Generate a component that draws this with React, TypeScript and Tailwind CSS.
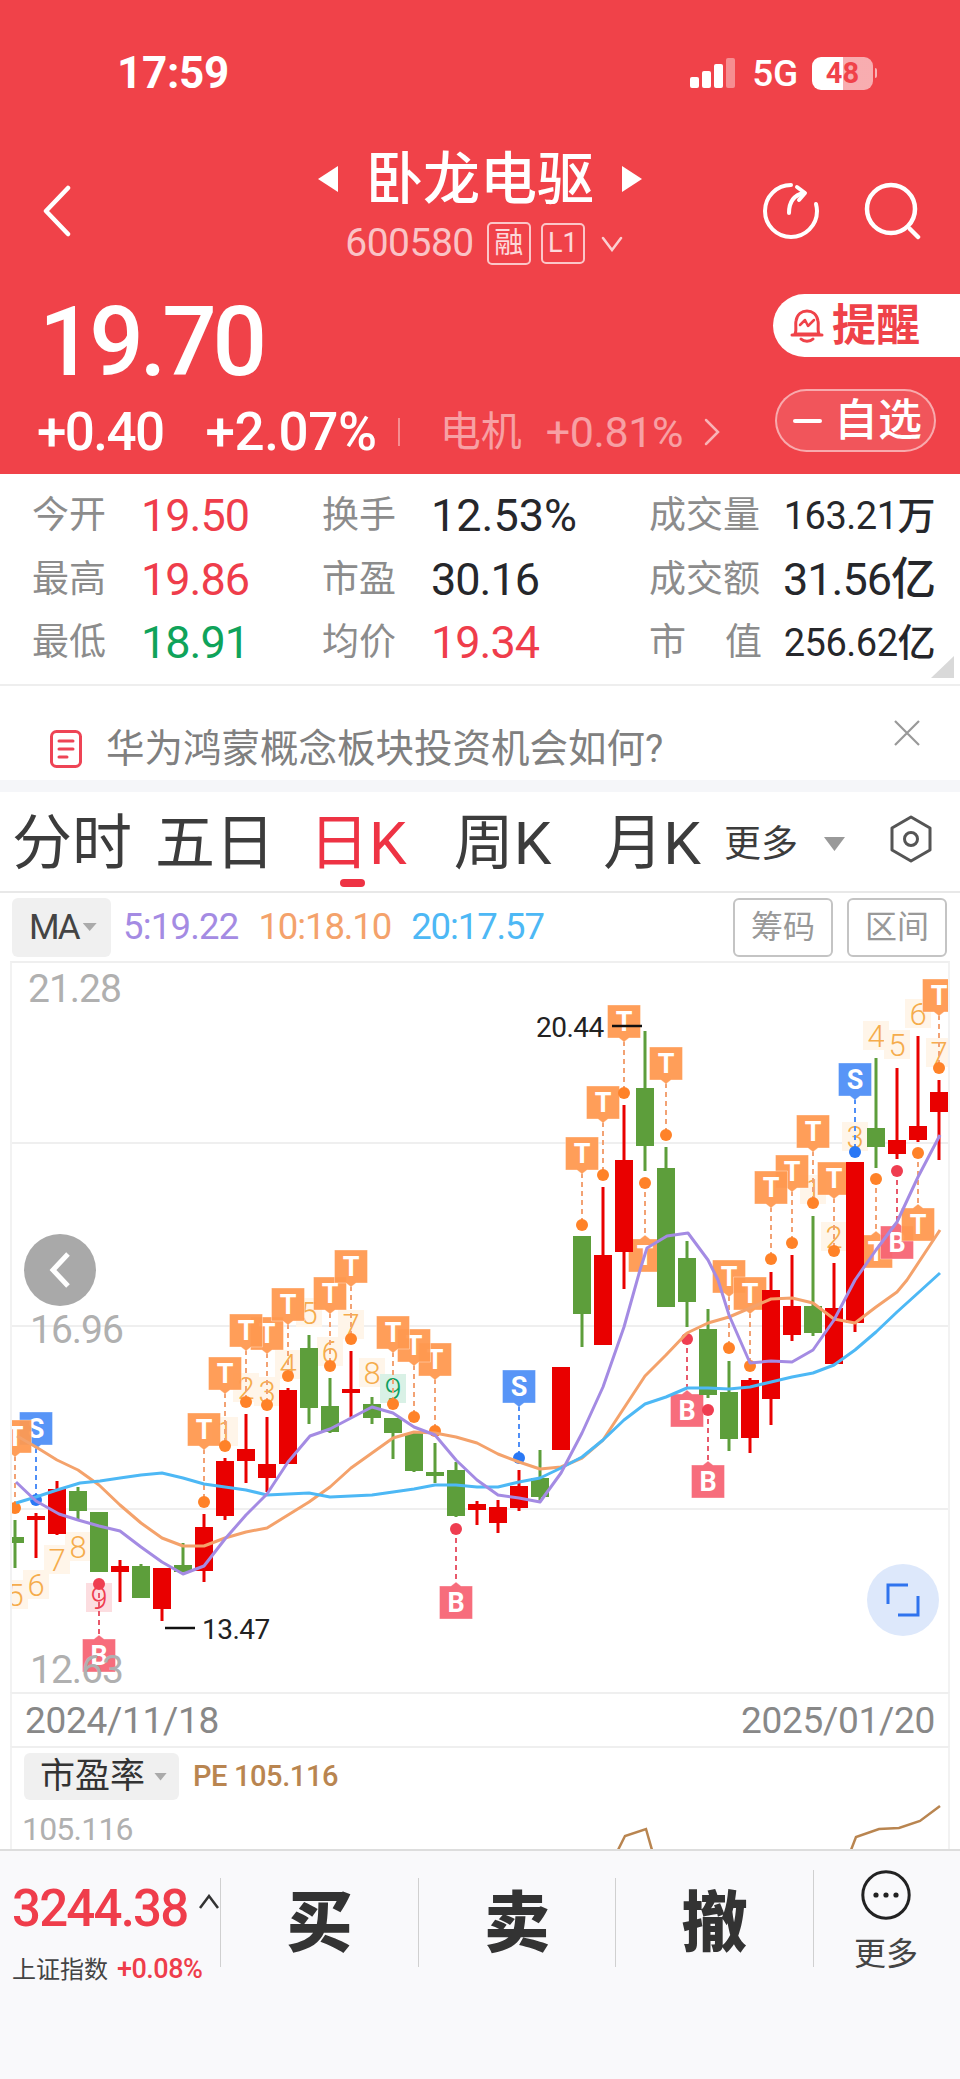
import React from "react";

// [x, up?, wickTop, bodyTop, bodyBottom, wickBottom]
type Candle = [number, boolean, number, number, number, number];

const candles: Candle[] = [
  [15, false, 1520, 1537, 1543, 1568],
  [36, true, 1513, 1516, 1520, 1558],
  [57, true, 1481, 1489, 1534, 1535],
  [78, false, 1487, 1491, 1511, 1521],
  [99, false, 1512, 1512, 1572, 1572],
  [120, true, 1560, 1566, 1572, 1602],
  [141, false, 1564, 1566, 1598, 1598],
  [162, true, 1568, 1568, 1609, 1621],
  [183, false, 1543, 1565, 1572, 1572],
  [204, true, 1514, 1527, 1571, 1582],
  [225, true, 1458, 1461, 1516, 1520],
  [246, true, 1414, 1449, 1461, 1483],
  [267, true, 1417, 1464, 1478, 1492],
  [288, true, 1388, 1390, 1464, 1464],
  [309, false, 1335, 1348, 1408, 1424],
  [330, false, 1378, 1406, 1432, 1433],
  [351, true, 1351, 1389, 1393, 1417],
  [372, false, 1397, 1404, 1418, 1424],
  [393, false, 1418, 1418, 1433, 1459],
  [414, false, 1433, 1433, 1471, 1472],
  [435, false, 1443, 1472, 1476, 1483],
  [456, false, 1462, 1470, 1516, 1517],
  [477, true, 1501, 1504, 1510, 1525],
  [498, true, 1500, 1507, 1523, 1533],
  [519, true, 1470, 1486, 1508, 1511],
  [540, false, 1450, 1478, 1497, 1502],
  [561, true, 1367, 1367, 1450, 1450],
  [582, false, 1236, 1236, 1314, 1347],
  [603, true, 1187, 1255, 1345, 1345],
  [624, true, 1105, 1160, 1252, 1289],
  [645, false, 1031, 1088, 1146, 1171],
  [666, false, 1147, 1168, 1307, 1307],
  [687, false, 1241, 1258, 1302, 1327],
  [708, false, 1309, 1329, 1395, 1398],
  [729, false, 1361, 1392, 1439, 1451],
  [750, true, 1378, 1380, 1438, 1453],
  [771, true, 1272, 1290, 1399, 1425],
  [792, true, 1255, 1306, 1335, 1341],
  [813, false, 1216, 1306, 1333, 1336],
  [834, true, 1263, 1308, 1364, 1364],
  [855, true, 1162, 1162, 1323, 1332],
  [876, false, 1058, 1128, 1147, 1168],
  [897, true, 1068, 1140, 1154, 1159],
  [918, true, 1036, 1126, 1140, 1142],
  [939, true, 1080, 1092, 1112, 1160],
];

const ma5 =
  "16,1482 36,1501 59,1514 78,1520 99,1526 120,1531 141,1547 162,1562 183,1574 204,1566 225,1539 246,1515 267,1494 288,1462 310,1436 330,1429 351,1418 372,1407 393,1413 414,1427 435,1435 456,1460 477,1480 498,1495 519,1498 540,1502 561,1473 582,1433 603,1387 624,1327 640,1270 647,1248 667,1236 688,1233 708,1260 718,1280 729,1315 750,1363 771,1361 792,1362 813,1350 834,1320 855,1280 876,1250 897,1222 918,1177 940,1135";
const ma10 =
  "17,1436 36,1447 57,1460 78,1470 99,1485 120,1505 141,1523 162,1538 183,1546 204,1546 225,1538 246,1532 267,1528 288,1515 309,1502 330,1487 351,1468 372,1453 393,1438 414,1432 435,1433 456,1437 477,1443 498,1454 519,1462 540,1469 561,1467 582,1458 603,1440 624,1408 645,1376 666,1355 687,1333 708,1323 729,1317 750,1308 771,1299 792,1298 813,1303 834,1319 855,1323 876,1307 897,1292 907,1280 940,1230";
const ma20 =
  "16,1503 36,1497 57,1490 80,1483 100,1481 120,1478 141,1475 162,1473 183,1478 204,1484 225,1487 246,1490 267,1495 288,1494 309,1493 330,1497 351,1496 372,1495 393,1492 414,1489 435,1485 456,1485 477,1487 498,1487 519,1482 540,1478 561,1468 582,1457 603,1440 624,1420 645,1404 666,1397 687,1388 708,1388 729,1389 750,1387 771,1382 792,1377 813,1373 834,1365 855,1350 876,1332 897,1312 918,1293 940,1273";

// trade signals: tag box + dot joined by a dashed line
type Signal = { x: number; top: number; dot: number; label: "T" | "S" | "B"; up?: boolean };

const signals: Signal[] = [
  { x: 267, top: 1317, dot: 1405, label: "T" },
  { x: 246, top: 1314, dot: 1402, label: "T" },
  { x: 330, top: 1277, dot: 1366, label: "T" },
  { x: 351, top: 1250, dot: 1339, label: "T" },
  { x: 288, top: 1288, dot: 1376, label: "T" },
  { x: 225, top: 1357, dot: 1446, label: "T" },
  { x: 204, top: 1413, dot: 1502, label: "T" },
  { x: 36, top: 1412, dot: 1500, label: "S" },
  { x: 15, top: 1420, dot: 1508, label: "T" },
  { x: 99, top: 1639, dot: 1584, label: "B", up: true },
  { x: 435, top: 1343, dot: 1431, label: "T" },
  { x: 414, top: 1329, dot: 1417, label: "T" },
  { x: 393, top: 1316, dot: 1404, label: "T" },
  { x: 456, top: 1586, dot: 1529, label: "B", up: true },
  { x: 519, top: 1370, dot: 1458, label: "S" },
  { x: 582, top: 1137, dot: 1225, label: "T" },
  { x: 603, top: 1086, dot: 1175, label: "T" },
  { x: 624, top: 1005, dot: 1093, label: "T" },
  { x: 645, top: 1239, dot: 1183, label: "T", up: true },
  { x: 666, top: 1047, dot: 1135, label: "T" },
  { x: 687, top: 1394, dot: 1339, label: "B", up: true },
  { x: 708, top: 1465, dot: 1410, label: "B", up: true },
  { x: 729, top: 1260, dot: 1348, label: "T" },
  { x: 750, top: 1277, dot: 1366, label: "T" },
  { x: 792, top: 1155, dot: 1243, label: "T" },
  { x: 771, top: 1171, dot: 1259, label: "T" },
  { x: 813, top: 1115, dot: 1203, label: "T" },
  { x: 834, top: 1162, dot: 1251, label: "T" },
  { x: 855, top: 1063, dot: 1152, label: "S" },
  { x: 876, top: 1235, dot: 1179, label: "T", up: true },
  { x: 897, top: 1226, dot: 1171, label: "B", up: true },
  { x: 918, top: 1208, dot: 1153, label: "T", up: true },
  { x: 939, top: 979, dot: 1068, label: "T" },
];

const tagColors = { T: "#FF9950", S: "#4F8FF7", B: "#F76575" };
const dashColors = { T: "#F2A274", S: "#4F8FF7", B: "#E8596B" };
const dotColors = { T: "#FF8228", S: "#2A78F5", B: "#EF3D50" };

// nine-turn count numbers behind the candles
const counts: [number, number, string, string?][] = [
  [15, 1595, "5"], [36, 1585, "6"], [57, 1560, "7"], [78, 1547, "8"], [99, 1598, "9", "red"],
  [225, 1432, "1"], [246, 1388, "2"], [267, 1392, "3"], [288, 1365, "4"], [309, 1313, "5"],
  [330, 1352, "6"], [351, 1325, "7"], [372, 1373, "8"], [393, 1389, "9", "green"],
  [813, 1190, "1"], [834, 1237, "2"], [855, 1137, "3"], [876, 1036, "4"], [897, 1045, "5"],
  [918, 1014, "6"], [939, 1053, "7"],
];

function KChart() {
  return (
    <svg viewBox="12 963 936 729" className="block w-full h-full">
      {[1143, 1326, 1509].map((y) => (
        <line key={y} x1="10" x2="950" y1={y} y2={y} stroke="#EFEFEF" strokeWidth="2" />
      ))}
      {counts.map(([x, y, n, tone]) => (
        <g key={`${x}-${n}`}>
          <rect
            x={x - 13}
            y={y - 15}
            width="26"
            height="29"
            fill={tone === "red" ? "#FCDDE0" : tone === "green" ? "#D9F1E6" : "#FFF5E9"}
          />
          <text
            x={x}
            y={y + 11}
            textAnchor="middle"
            fontSize="31"
            fontWeight="300"
            fill={tone === "red" ? "#EF3D50" : tone === "green" ? "#0FA060" : "#F5AC4C"}
          >
            {n}
          </text>
        </g>
      ))}
      {signals.map((s, i) => (
        <g key={i}>
          <line
            x1={s.x}
            x2={s.x}
            y1={s.up ? s.dot : s.top + 36}
            y2={s.up ? s.top - 3 : s.dot}
            stroke={dashColors[s.label]}
            strokeWidth="2"
            strokeDasharray="5 4"
          />
          <path
            d={
              s.up
                ? `M${s.x - 16.5} ${s.top}H${s.x - 5}L${s.x} ${s.top - 4}L${s.x + 5} ${s.top}H${s.x + 16.5}V${s.top + 33}H${s.x - 16.5}Z`
                : `M${s.x - 16.5} ${s.top}H${s.x + 16.5}V${s.top + 33}H${s.x + 5}L${s.x} ${s.top + 37}L${s.x - 5} ${s.top + 33}H${s.x - 16.5}Z`
            }
            fill={tagColors[s.label]}
            stroke="#fff"
            strokeOpacity="0.7"
            strokeWidth="0.5"
            fillOpacity="0.95"
          />
          <text
            x={s.x}
            y={s.top + 26}
            textAnchor="middle"
            fontSize="27"
            fontWeight="700"
            fill="#fff"
          >
            {s.label}
          </text>
        </g>
      ))}
      {candles.map(([x, up, wt, bt, bb, wb]) => (
        <g key={x} fill={up ? "#E90000" : "#5D9E3B"}>
          <rect x={x - 1.5} y={wt} width="3" height={wb - wt} />
          <rect x={x - 9} y={bt} width="18" height={bb - bt} />
        </g>
      ))}
      {signals.map((s, i) => (
        <circle key={i} cx={s.x} cy={s.dot} r="6" fill={dotColors[s.label]} />
      ))}
      <polyline points={ma10} fill="none" stroke="#F4A26B" strokeWidth="3" strokeLinejoin="round" />
      <polyline points={ma20} fill="none" stroke="#4DB8F5" strokeWidth="3" strokeLinejoin="round" />
      <polyline points={ma5} fill="none" stroke="#A48BE3" strokeWidth="3" strokeLinejoin="round" />
      <line x1="612" x2="642" y1="1026" y2="1026" stroke="#111" strokeWidth="2.5" />
      <text x="536" y="1037" fontSize="28" letterSpacing="-0.5" fill="#222">20.44</text>
      <line x1="165" x2="195" y1="1628" y2="1628" stroke="#111" strokeWidth="2.5" />
      <text x="202" y="1639" fontSize="28" letterSpacing="-0.5" fill="#222">13.47</text>
    </svg>
  );
}

function RefreshIcon() {
  return (
    <svg width="58" height="58" viewBox="0 0 58 58" fill="none" stroke="#fff" strokeWidth="4" strokeLinecap="round" strokeLinejoin="round">
      <path d="M29 3A26 26 0 1 0 55 29C55 26 54.5 24 54 22" />
      <path d="M27 31C27 20 32 13 42 11" />
      <path d="M35 5L43 11L37 18" />
    </svg>
  );
}

function SearchIcon() {
  return (
    <svg width="58" height="58" viewBox="0 0 58 58" fill="none" stroke="#fff" strokeWidth="4.5" strokeLinecap="round">
      <circle cx="27" cy="27" r="24" />
      <path d="M46 47L54 55" />
    </svg>
  );
}

function BellIcon() {
  return (
    <svg width="34" height="36" viewBox="0 0 34 36" fill="none" stroke="#EF4249" strokeWidth="3" strokeLinecap="round" strokeLinejoin="round">
      <path d="M5 26C7 22 5 17 6 13C7 6 12 3 17 3C22 3 27 6 28 13C29 17 27 22 29 26Z" />
      <path d="M2 27H32" />
      <path d="M11 31C14 34 20 34 23 31" />
      <path d="M10 17L15 12L18 18L24 12" strokeWidth="2.5" />
    </svg>
  );
}

function NoteIcon() {
  return (
    <svg width="32" height="38" viewBox="0 0 32 38" fill="none" stroke="#EE4455" strokeWidth="3" strokeLinecap="round">
      <rect x="1.5" y="1.5" width="29" height="35" rx="5" />
      <path d="M9 11H23M9 19H23M9 27H17" />
    </svg>
  );
}

function HexIcon() {
  return (
    <svg width="42" height="48" viewBox="0 0 42 48" fill="none" stroke="#555" strokeWidth="3" strokeLinejoin="round">
      <path d="M21 2L40 13V35L21 46L2 35V13Z" />
      <circle cx="21" cy="24" r="6.5" />
    </svg>
  );
}

function Caret({ className }: { className: string }) {
  return <span className={`inline-block [clip-path:polygon(0_0,100%_0,50%_100%)] ${className}`} />;
}

const statLabel = "text-[#8C8C8C] text-[37px] leading-none";
const statValue = "text-[45px] font-[450] leading-none tracking-[-1px]";

export default function App() {
  return (
    <div className="relative w-[960px] h-[2079px] overflow-hidden bg-white [font-family:Roboto,'Noto_Sans_CJK_SC',sans-serif]">
      {/* top quote panel */}
      <header className="h-[474px] bg-[#F04249] text-white">
        <div className="flex items-center justify-between pt-[53px] h-[93px] pl-[117px] pr-[83px]">
          <span className="text-[44px] font-bold leading-none tracking-[-0.3px]">17:59</span>
          <div className="flex items-center">
            <div className="flex items-end gap-[3px] h-[30px]">
              <span className="w-[9px] h-[11px] rounded-[2px] bg-white" />
              <span className="w-[9px] h-[17px] rounded-[2px] bg-white" />
              <span className="w-[9px] h-[24px] rounded-[2px] bg-white" />
              <span className="w-[9px] h-[30px] rounded-[2px] bg-white/40" />
            </div>
            <span className="ml-[17px] text-[37px] font-medium leading-none tracking-[-0.3px]">5G</span>
            <span className="ml-[14px] flex items-center justify-center w-[61px] h-[33px] rounded-[9px] bg-[linear-gradient(90deg,#fff_50%,#ffffff90_50%)] text-[#F04249] text-[29px] font-bold leading-none">
              48
            </span>
            <span className="ml-[2px] w-[2px] h-[10px] rounded-r bg-white/60" />
          </div>
        </div>

        <div className="mt-[44px] h-[129px] grid grid-cols-[1fr_auto_1fr] items-center">
          <svg width="30" height="52" viewBox="0 0 30 52" fill="none" stroke="#fff" strokeWidth="4.5" strokeLinecap="round" strokeLinejoin="round" className="ml-[42px] mt-[19px]">
            <path d="M26 3L4 26L26 49" />
          </svg>
          <div className="flex flex-col items-center">
            <div className="h-[84px] flex items-center">
              <Triangle dir="left" />
              <span className="mx-[28px] text-[57px] font-medium leading-none">卧龙电驱</span>
              <Triangle dir="right" />
            </div>
            <div className="ml-[8px] h-[45px] flex items-center text-white/70">
              <span className="text-[39px] leading-none tracking-[-0.5px]">600580</span>
              <span className="ml-[13px] flex items-center justify-center w-[44px] h-[43px] border-2 border-white/70 rounded-[5px] text-[29px] leading-none text-white/80">融</span>
              <span className="ml-[10px] flex items-center justify-center w-[44px] h-[41px] border-2 border-white/70 rounded-[5px] text-[27px] leading-none text-white/80">L1</span>
              <svg width="22" height="16" viewBox="0 0 22 16" fill="none" stroke="#fff" strokeOpacity="0.75" strokeWidth="2.5" strokeLinecap="round" className="ml-[16px]">
                <path d="M2 2L11 14L20 2" />
              </svg>
            </div>
          </div>
          <div className="flex items-center justify-end gap-[44px] pr-[38px] mt-[19px]">
            <RefreshIcon />
            <SearchIcon />
          </div>
        </div>

        <div className="mt-[28px] flex justify-between items-start">
          <div className="pl-[37px]">
            <div className="ml-[2px] h-[96px] flex items-center text-[96px] font-medium leading-none tracking-[-4.2px]">19.70</div>
            <div className="mt-[12px] h-[60px] flex items-center">
              <span className="text-[53px] leading-none tracking-[-1.6px] font-medium">+0.40</span>
              <span className="ml-[42px] text-[53px] leading-none tracking-[-0.4px] font-medium">+2.07%</span>
              <span className="ml-[21px] w-[2px] h-[28px] bg-white/40" />
              <span className="ml-[40px] text-[41px] leading-none text-white/50">电机</span>
              <span className="ml-[24px] text-[43px] leading-none tracking-[-0.4px] text-white/50">+0.81%</span>
              <svg width="16" height="28" viewBox="0 0 16 28" fill="none" stroke="#fff" strokeOpacity="0.6" strokeWidth="2.5" strokeLinecap="round" className="ml-[21px]">
                <path d="M2 2L14 14L2 26" />
              </svg>
            </div>
          </div>
          <div className="w-[187px]">
            <div className="h-[63px] bg-white rounded-l-[32px] flex items-center pl-[17px] text-[#EF4249]">
              <BellIcon />
              <span className="ml-[8px] text-[44px] font-bold leading-none">提醒</span>
            </div>
            <div className="mt-[32px] ml-[2px] w-[161px] h-[63px] rounded-[32px] border-2 border-white/50 bg-white/10 flex items-center pl-[16px]">
              <span className="w-[29px] h-[4px] bg-white rounded" />
              <span className="ml-[12px] text-[44px] font-medium leading-none">自选</span>
            </div>
          </div>
        </div>
      </header>

      {/* stats table */}
      <section className="relative h-[212px] border-b-2 border-[#EEEEEE] pt-[10px] pl-[32px] pr-[25px]">
        <div className="grid grid-cols-[109px_181px_109px_218px_1fr] auto-rows-[63.5px] items-center">
          <span className={statLabel}>今开</span>
          <span className={`${statValue} text-[#EF3D4B]`}>19.50</span>
          <span className={statLabel}>换手</span>
          <span className="text-[45px] font-[450] leading-none tracking-[0px] text-[#26272B]">12.53%</span>
          <div className="flex items-center justify-between">
            <span className={statLabel}>成交量</span>
            <span className="text-[38px] font-[450] leading-none tracking-[-0.5px] text-[#26272B]">163.21万</span>
          </div>
          <span className={statLabel}>最高</span>
          <span className={`${statValue} text-[#EF3D4B]`}>19.86</span>
          <span className={statLabel}>市盈</span>
          <span className={`${statValue} text-[#26272B]`}>30.16</span>
          <div className="flex items-center justify-between">
            <span className={statLabel}>成交额</span>
            <span className="text-[45px] font-[450] leading-none tracking-[-1px] text-[#26272B]">31.56亿</span>
          </div>
          <span className={statLabel}>最低</span>
          <span className={`${statValue} text-[#0FA35A]`}>18.91</span>
          <span className={statLabel}>均价</span>
          <span className={`${statValue} text-[#EF3D4B]`}>19.34</span>
          <div className="flex items-center justify-between">
            <span className={`${statLabel} w-[113px] flex justify-between`}>
              <span>市</span>
              <span>值</span>
            </span>
            <span className="text-[38px] font-[450] leading-none tracking-[-0.5px] text-[#26272B]">256.62亿</span>
          </div>
        </div>
        <span className="absolute right-[6px] bottom-[6px] w-[23px] h-[22px] bg-[#D9D9D9] [clip-path:polygon(100%_0,100%_100%,0_100%)]" />
      </section>

      {/* news ticker */}
      <section className="relative h-[94px] flex items-center pl-[50px] pt-[32px]">
        <NoteIcon />
        <span className="ml-[24px] text-[38.5px] leading-none text-[#808080]">华为鸿蒙概念板块投资机会如何?</span>
        <svg width="28" height="28" viewBox="0 0 28 28" stroke="#999" strokeWidth="2.2" className="absolute left-[893px] top-[33px]">
          <path d="M2 2L26 26M26 2L2 26" />
        </svg>
      </section>
      <div className="h-[12px] bg-[#F5F6F9]" />

      {/* period tabs */}
      <nav className="relative h-[99px] flex items-center pl-[12px] pt-[5px] text-[#3C3C3C] text-[60px] leading-none">
        <span>分时</span>
        <span className="ml-[23px]">五日</span>
        <span className="relative ml-[34px] text-[#EE3344]">
          日K
          <span className="absolute left-[31px] top-[65px] w-[25px] h-[8px] rounded-full bg-[#EE3344]" />
        </span>
        <span className="ml-[47px]">周K</span>
        <span className="ml-[52px]">月K</span>
        <span className="ml-[23px] text-[37px]">更多</span>
        <Caret className="ml-[26px] w-[21px] h-[14px] bg-[#999]" />
        <span className="ml-[45px] mt-[-10px]">
          <HexIcon />
        </span>
      </nav>

      {/* indicator row */}
      <div className="h-[70px] border-t-2 border-[#E8E8E8] flex items-center pl-[12px] pr-[13px]">
        <div className="w-[99px] h-[59px] bg-[#F0F0F0] rounded-[6px] flex items-center pl-[17px] text-[35px] leading-none tracking-[-2px] text-[#444]">
          MA
          <Caret className="ml-[4px] w-[14px] h-[8px] bg-[#AAAAAA]" />
        </div>
        <span className="ml-[12px] text-[36.5px] leading-none tracking-[-0.8px] text-[#A48BE3]">5:19.22</span>
        <span className="ml-[20px] text-[36.5px] leading-none tracking-[-1.1px] text-[#F4A26B]">10:18.10</span>
        <span className="ml-[20px] text-[36.5px] leading-none tracking-[-1.1px] text-[#4DB8F5]">20:17.57</span>
        <span className="ml-auto w-[100px] h-[59px] border-2 border-[#C4C4C4] rounded-[6px] flex items-center justify-center text-[32px] leading-none text-[#999]">筹码</span>
        <span className="ml-[14px] w-[100px] h-[59px] border-2 border-[#C4C4C4] rounded-[6px] flex items-center justify-center text-[32px] leading-none text-[#999]">区间</span>
      </div>

      {/* candlestick panel */}
      <div className="relative mx-[10px] h-[731px] border-t-2 border-[#EFEFEF] border-x-2 border-x-[#F2F2F2]">
        <KChart />
        <span className="absolute left-[16px] top-[7px] text-[39px] leading-none tracking-[-1px] text-[#B0B0B0]">21.28</span>
        <span className="absolute left-[18px] top-[348px] text-[39px] leading-none tracking-[-1px] text-[#B0B0B0]">16.96</span>
        <span className="absolute left-[18px] top-[688px] text-[39px] leading-none tracking-[-1px] text-[#B0B0B0]">12.63</span>
        <button className="absolute left-[12px] top-[271px] w-[72px] h-[72px] rounded-full bg-[#A9A9A9] flex items-center justify-center">
          <svg width="22" height="36" viewBox="0 0 22 36" fill="none" stroke="#fff" strokeWidth="5">
            <path d="M19 2L4 18L19 34" />
          </svg>
        </button>
        <button className="absolute left-[855px] top-[601px] w-[72px] h-[72px] rounded-full bg-[#DDE8FB]">
          <svg width="72" height="72" viewBox="0 0 72 72" fill="none" stroke="#2F73EE" strokeWidth="3" className="block">
            <path d="M21 40V21H41M31 51H51V32" />
          </svg>
        </button>
      </div>

      {/* date axis */}
      <div className="mx-[10px] h-[54px] border-t-2 border-[#EFEFEF] border-x-2 border-x-[#F2F2F2] flex items-center justify-between px-[13px] text-[37px] leading-none tracking-[-0.3px] text-[#888888]">
        <span>2024/11/18</span>
        <span>2025/01/20</span>
      </div>

      {/* PE sub chart */}
      <div className="relative mx-[10px] h-[103px] border-t-2 border-[#EFEFEF] border-x-2 border-x-[#F2F2F2] overflow-hidden">
        <div className="flex items-center mt-[5px] ml-[12px]">
          <div className="w-[155px] h-[47px] bg-[#F0F0F0] rounded-[6px] flex items-center pl-[16px] text-[35px] leading-none text-[#333]">
            市盈率
            <Caret className="ml-[9px] w-[13px] h-[8px] bg-[#AAAAAA]" />
          </div>
          <span className="ml-[14px] text-[29px] font-medium leading-none tracking-[-0.4px] text-[#B98550]">PE 105.116</span>
        </div>
        <span className="absolute left-[10px] top-[65px] text-[32px] leading-none tracking-[-0.8px] text-[#B0B0B0]">105.116</span>
        <svg width="936" height="101" viewBox="12 1748 936 101" fill="none" stroke="#B98550" strokeWidth="2.5" className="absolute left-0 top-0">
          <polyline points="618,1850 625,1836 646,1829 652,1850" />
          <polyline points="851,1850 856,1837 879,1829 899,1828 920,1821 940,1806" />
        </svg>
      </div>

      {/* bottom trade bar */}
      <footer className="h-[230px] bg-[#F9F9FB] border-t-2 border-[#DDDDDD] pt-[27px]">
        <div className="flex h-[89px]">
          <div className="w-[220px] pl-[12px]">
            <div className="flex items-center h-[60px]">
              <span className="text-[51px] font-medium leading-none tracking-[-1.8px] text-[#EF3D4B]">3244.38</span>
              <svg width="22" height="15" viewBox="0 0 22 15" fill="none" stroke="#333" strokeWidth="2.5" className="ml-[10px] mb-[14px]">
                <path d="M2 14L11 2L20 14" />
              </svg>
            </div>
            <div className="mt-[18px] flex items-center whitespace-nowrap leading-none">
              <span className="text-[24px] text-[#444]">上证指数</span>
              <span className="ml-[9px] text-[27px] font-medium tracking-[-0.5px] text-[#EF3D4B]">+0.08%</span>
            </div>
          </div>
          <div className="w-[198px] border-l border-[#D0D0D0] flex items-center justify-center pt-[3px] text-[66px] font-black leading-none text-[#333]">买</div>
          <div className="w-[197px] border-l border-[#D0D0D0] flex items-center justify-center pt-[3px] text-[66px] font-black leading-none text-[#333]">卖</div>
          <div className="w-[198px] border-l border-[#D0D0D0] flex items-center justify-center pt-[3px] text-[66px] font-black leading-none text-[#333]">撤</div>
          <div className="flex-1 border-l border-[#D0D0D0] flex flex-col items-center -mt-[8px] pr-[2px]">
            <svg width="50" height="50" viewBox="0 0 50 50" className="shrink-0">
              <circle cx="25" cy="25" r="23.2" fill="none" stroke="#222" strokeWidth="3" />
              <circle cx="15" cy="25" r="2.6" fill="#222" />
              <circle cx="25" cy="25" r="2.6" fill="#222" />
              <circle cx="35" cy="25" r="2.6" fill="#222" />
            </svg>
            <span className="mt-[18px] text-[32px] leading-none text-[#444]">更多</span>
          </div>
        </div>
      </footer>
    </div>
  );
}

function Triangle({ dir }: { dir: "left" | "right" }) {
  return (
    <span
      className={
        dir === "left"
          ? "w-[20px] h-[26px] bg-white [clip-path:polygon(100%_0,100%_100%,0_50%)]"
          : "w-[20px] h-[26px] bg-white [clip-path:polygon(0_0,100%_50%,0_100%)]"
      }
    />
  );
}
